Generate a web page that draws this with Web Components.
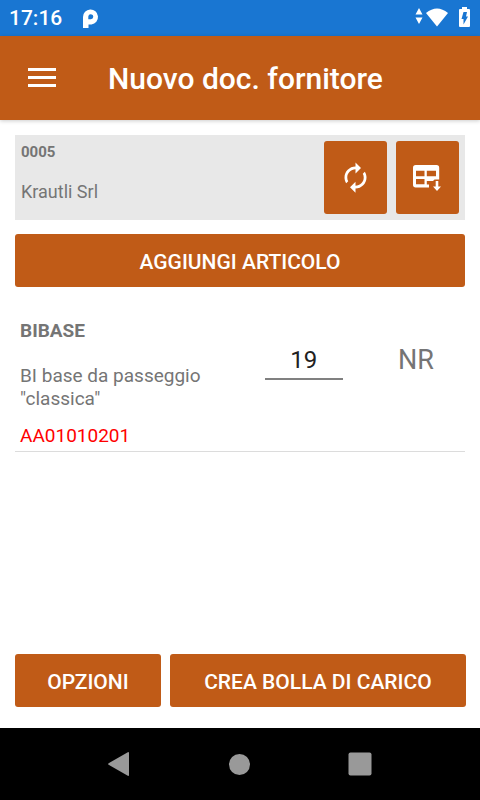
<!DOCTYPE html>
<html lang="it">
<head>
<meta charset="utf-8">
<meta name="viewport" content="width=device-width, initial-scale=1">
<title>Nuovo doc. fornitore</title>
<style>
  html, body {
    height: 100%;
  }
  body {
    margin: 0;
    background: #fff;
    color: #757575;
    font-family: Roboto, "Liberation Sans", sans-serif;
    --accent: #c05b17;
    --status: #1976d2;
  }
</style>
</head>
<body>
<doc-screen>
  <status-bar slot="top" time="17:16"></status-bar>
  <app-bar slot="top">Nuovo doc. fornitore</app-bar>

  <supplier-card>
    <span slot="code">0005</span>
    <span slot="name">Krautli Srl</span>
    <action-button slot="actions" label="Aggiorna">
      <svg width="33" height="33" viewBox="0 0 24 24" fill="#fff">
        <path d="M12 6v3l4-4-4-4v3c-4.42 0-8 3.58-8 8 0 1.57.46 3.03 1.24 4.26L6.7 14.8c-.45-.83-.7-1.79-.7-2.8 0-3.31 2.69-6 6-6zm6.76 1.74L17.3 9.2c.44.84.7 1.79.7 2.8 0 3.31-2.69 6-6 6v-3l-4 4 4 4v-3c4.42 0 8-3.58 8-8 0-1.57-.46-3.03-1.24-4.26z"/>
      </svg>
    </action-button>
    <action-button slot="actions" label="Importa righe">
      <svg width="29" height="27" viewBox="0 0 29 27" fill="#fff">
        <path fill-rule="evenodd" d="M2.700 1H23.500a2.700 2.700 0 0 1 2.700 2.700V15.500h-4.700l-1.500 1.500H13.800v3.500H16v3H2.700A2.700 2.700 0 0 1 0 20.800V3.700A2.700 2.700 0 0 1 2.700 1zM3 6.700v5.600h8.500V6.700zM13.800 6.700v5.600h9.200V6.700zM3 15v5.300h8.500V15z"/>
        <path d="M22.700 17h2.600v5.500H28l-4 4.500-4-4.500h2.700z"/>
      </svg>
    </action-button>
  </supplier-card>

  <action-button>AGGIUNGI ARTICOLO</action-button>

  <article-row quantity="19">
    <span slot="code">BIBASE</span>
    <span slot="description">BI base da passeggio "classica"</span>
    <span slot="lot">AA01010201</span>
    <span slot="unit">NR</span>
  </article-row>

  <action-button slot="footer">OPZIONI</action-button>
  <action-button slot="footer">CREA BOLLA DI CARICO</action-button>
  <nav-bar slot="bottom"></nav-bar>
</doc-screen>

<script>
class DocScreen extends HTMLElement {
  constructor() {
    super();
    this.attachShadow({ mode: "open" });
    this.shadowRoot.innerHTML = `
      <style>
        :host {
          display: flex;
          flex-direction: column;
          min-height: 100%;
        }
        main {
          flex: 1;
          display: flex;
          flex-direction: column;
          gap: 14px;
          padding: 15px;
        }
        footer {
          display: grid;
          grid-template-columns: 33fr 67fr;
          gap: 9px;
          padding: 0 14px 21px 15px;
        }
      </style>
      <slot name="top"></slot>
      <main><slot></slot></main>
      <footer><slot name="footer"></slot></footer>
      <slot name="bottom"></slot>
    `;
  }
}

class StatusBar extends HTMLElement {
  constructor() {
    super();
    this.attachShadow({ mode: "open" });
    this.shadowRoot.innerHTML = `
      <style>
        :host {
          display: flex;
          align-items: center;
          height: 36px;
          padding: 0 10px 0 9px;
          background: var(--status);
          color: #fff;
          font-size: 21px;
          font-weight: 500;
        }
        .app {
          margin-left: 20px;
        }
        .system {
          display: flex;
          align-items: center;
          margin-left: auto;
        }
        .battery {
          margin-left: 10px;
        }
      </style>
      <time></time>
      <svg class="app" width="17" height="20" viewBox="0 0 17 20" aria-hidden="true">
        <path fill="#fff" fill-rule="evenodd" d="M1 9a7.500 7.500 0 1 1 8.500 7.400H6.500V20H1zM6.300 8.500v2.700h2.400A2.500 2.500 0 1 0 6.300 8.500z"/>
      </svg>
      <div class="system">
        <svg width="34" height="22" viewBox="0 0 34 22" fill="#fff" aria-hidden="true">
          <path d="M0.500 7.500L4 1l3.500 6.500zM0.500 10.500h7L4 17z"/>
          <path d="M11 6Q22 -3 33 6L22 19.500z"/>
        </svg>
        <svg class="battery" width="11" height="22" viewBox="0 0 11 22" aria-hidden="true">
          <path fill="#fff" d="M3 0h5v2h2a1 1 0 0 1 1 1v16a1 1 0 0 1-1 1H1a1 1 0 0 1-1-1V3a1 1 0 0 1 1-1h2z"/>
          <path fill="#1976d2" d="M4.500 5H8L7 9.500h2L4.500 17.500V12H2.500z"/>
        </svg>
      </div>
    `;
  }

  connectedCallback() {
    this.shadowRoot.querySelector("time").textContent = this.getAttribute("time");
  }
}

class AppBar extends HTMLElement {
  constructor() {
    super();
    this.attachShadow({ mode: "open" });
    this.shadowRoot.innerHTML = `
      <style>
        :host {
          display: flex;
          align-items: center;
          height: 84px;
          background: var(--accent);
          color: #fff;
          box-shadow: 0 1px 4px rgba(0, 0, 0, 0.2);
        }
        button {
          width: 84px;
          height: 84px;
          padding: 0;
          border: 0;
          background: none;
        }
        svg {
          display: block;
          margin: auto;
        }
        h1 {
          margin: 0;
          padding: 2px 0 0 24px;
          font-size: 30px;
          line-height: 36px;
          font-weight: 500;
        }
      </style>
      <button type="button" aria-label="Menu">
        <svg width="28" height="20" viewBox="0 0 28 20" fill="#fff">
          <path d="M0 0h28v3H0zM0 8h28v3H0zM0 16h28v3H0z"/>
        </svg>
      </button>
      <h1><slot></slot></h1>
    `;
  }
}

class ActionButton extends HTMLElement {
  constructor() {
    super();
    this.attachShadow({ mode: "open" });
    this.shadowRoot.innerHTML = `
      <style>
        :host {
          display: block;
        }
        button {
          display: flex;
          align-items: center;
          justify-content: center;
          width: 100%;
          height: 100%;
          min-height: 53px;
          padding: 2px 0 0;
          border: 0;
          border-radius: 3px;
          background: var(--accent);
          color: #fff;
          font: 500 21px/24px Roboto, "Liberation Sans", sans-serif;
        }
        :host([label]) button {
          padding: 0;
        }
      </style>
      <button type="button"><slot></slot></button>
    `;
  }

  connectedCallback() {
    if (this.hasAttribute("label")) {
      this.shadowRoot.querySelector("button").setAttribute("aria-label", this.getAttribute("label"));
    }
  }
}

class SupplierCard extends HTMLElement {
  constructor() {
    super();
    this.attachShadow({ mode: "open" });
    this.shadowRoot.innerHTML = `
      <style>
        :host {
          display: flex;
          gap: 9px;
          padding: 6px;
          background: #e8e8e8;
        }
        .info {
          flex: 1;
          display: flex;
          flex-direction: column;
          gap: 18px;
        }
        .code {
          font-size: 15px;
          line-height: 22px;
          font-weight: 700;
        }
        .name {
          font-size: 18px;
          line-height: 22px;
        }
        .actions {
          display: grid;
          grid-template-columns: 63px 63px;
          grid-auto-rows: 73px;
          gap: 9px;
        }
      </style>
      <div class="info">
        <div class="code"><slot name="code"></slot></div>
        <div class="name"><slot name="name"></slot></div>
      </div>
      <div class="actions"><slot name="actions"></slot></div>
    `;
  }
}

class ArticleRow extends HTMLElement {
  constructor() {
    super();
    this.attachShadow({ mode: "open" });
    this.shadowRoot.innerHTML = `
      <style>
        :host {
          display: grid;
          grid-template-columns: 2fr 78px 1fr;
          padding: 18px 0 4px 5px;
          border-bottom: 1px solid #dcdcdc;
          font-size: 19px;
          line-height: 23px;
        }
        .code {
          margin-bottom: 22px;
          font-weight: 700;
        }
        .lot {
          margin-top: 14px;
          color: #f00;
        }
        input {
          box-sizing: border-box;
          width: 100%;
          height: 38px;
          margin-top: 23px;
          padding: 0;
          border: 0;
          border-bottom: 2px solid #808080;
          border-radius: 0;
          background: none;
          color: #212121;
          font: 24px/28px Roboto, "Liberation Sans", sans-serif;
          text-align: center;
        }
        .unit {
          margin-top: 25px;
          padding-left: 24px;
          font-size: 27px;
          line-height: 32px;
          text-align: center;
        }
      </style>
      <div>
        <div class="code"><slot name="code"></slot></div>
        <div><slot name="description"></slot></div>
        <div class="lot"><slot name="lot"></slot></div>
      </div>
      <div><input type="text" inputmode="numeric" aria-label="Quantità"></div>
      <div class="unit"><slot name="unit"></slot></div>
    `;
  }

  connectedCallback() {
    this.shadowRoot.querySelector("input").value = this.getAttribute("quantity");
  }
}

class NavBar extends HTMLElement {
  constructor() {
    super();
    this.attachShadow({ mode: "open" });
    this.shadowRoot.innerHTML = `
      <style>
        :host {
          display: grid;
          grid-template-columns: repeat(3, 25%);
          justify-content: center;
          height: 72px;
          background: #000;
        }
        button {
          display: flex;
          align-items: center;
          justify-content: center;
          padding: 0;
          border: 0;
          background: none;
        }
      </style>
      <button type="button" aria-label="Indietro">
        <svg width="24" height="24" viewBox="0 0 24 24" fill="#999">
          <path d="M0.600 11.200L19.800 0.200Q21 -0.200 21 1v22Q21 24.200 19.800 23.800L0.600 12.800Q-0.400 12 0.600 11.200z"/>
        </svg>
      </button>
      <button type="button" aria-label="Home">
        <svg width="24" height="24" viewBox="0 0 24 24" fill="#999">
          <circle cx="11.500" cy="12.500" r="10.500"/>
        </svg>
      </button>
      <button type="button" aria-label="Recenti">
        <svg width="24" height="24" viewBox="0 0 24 24" fill="#999">
          <rect x="0.500" y="0.500" width="23" height="23" rx="2"/>
        </svg>
      </button>
    `;
  }
}

customElements.define("doc-screen", DocScreen);
customElements.define("status-bar", StatusBar);
customElements.define("app-bar", AppBar);
customElements.define("action-button", ActionButton);
customElements.define("supplier-card", SupplierCard);
customElements.define("article-row", ArticleRow);
customElements.define("nav-bar", NavBar);
</script>
</body>
</html>
